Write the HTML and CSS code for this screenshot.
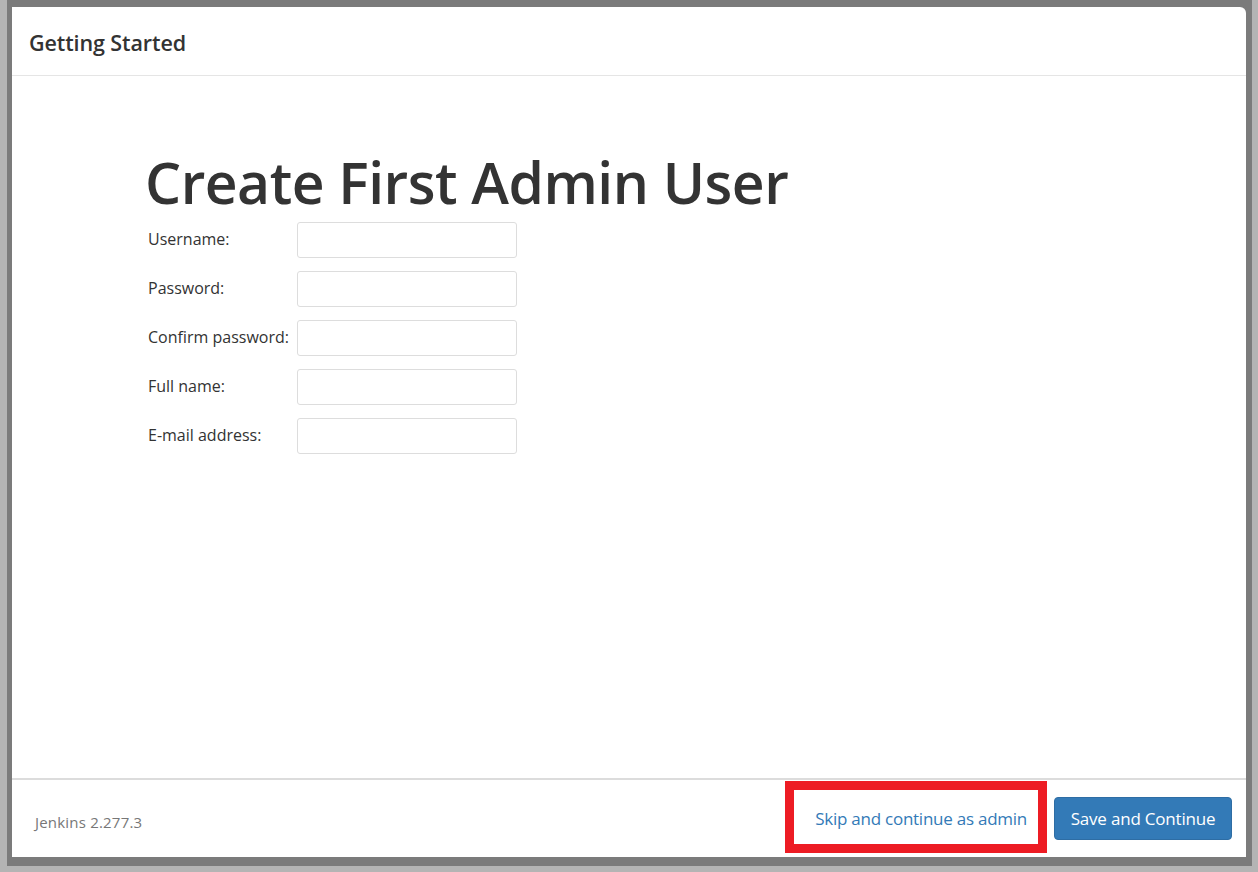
FILE: index.html
```html
<!DOCTYPE html>
<html>
<head>
<meta charset="utf-8">
<link rel="stylesheet" href="styles.css">
</head>
<body>
<div class="backdrop">
  <div class="dialog">
    <div class="dlg-header">
      <h4 class="dlg-title">Getting Started</h4>
    </div>
    <div class="dlg-body">
      <h1 class="page-title">Create First Admin User</h1>
      <div class="form">
        <div class="row"><label class="lbl">Username:</label><input class="field" type="text"></div>
        <div class="row"><label class="lbl">Password:</label><input class="field" type="password"></div>
        <div class="row"><label class="lbl">Confirm password:</label><input class="field" type="password"></div>
        <div class="row"><label class="lbl">Full name:</label><input class="field" type="text"></div>
        <div class="row"><label class="lbl">E-mail address:</label><input class="field" type="text"></div>
      </div>
    </div>
    <div class="dlg-footer">
      <div class="version">Jenkins 2.277.3</div>
      <div class="actions">
        <div class="skip-wrap">
          <a class="skip" href="#">Skip and continue as admin</a>
          <span class="highlight"></span>
        </div>
        <button class="btn-primary">Save and Continue</button>
      </div>
    </div>
  </div>
</div>
</body>
</html>
```
FILE: styles.css
```css
html, body {
  margin: 0;
  padding: 0;
}
body {
  width: 1258px;
  height: 872px;
  background: #b4b4b4;
  font-family: "Open Sans", "Noto Sans", sans-serif;
  overflow: hidden;
}
.backdrop {
  margin-left: 7px;
  width: 1245px;
  height: 866px;
  background: #7b7b7b;
  padding: 7px 6px 9px 5px;
  box-sizing: border-box;
}
.dialog {
  background: #fff;
  height: 100%;
  border-radius: 0 6px 0 0;
  display: flex;
  flex-direction: column;
}
.dlg-header {
  height: 69px;
  border-bottom: 1px solid #e5e5e5;
  display: flex;
  align-items: center;
  padding-left: 17px;
  padding-top: 2px;
  box-sizing: border-box;
}
.dlg-title {
  margin: 0;
  font-size: 21.5px;
  font-weight: 600;
  color: #333;
  letter-spacing: -0.1px;
}
.dlg-body {
  flex: 1;
  padding-left: 133px;
  padding-top: 70px;
}
.page-title {
  margin: 0;
  font-size: 57px;
  font-weight: 600;
  color: #333;
  line-height: 72px;
  letter-spacing: -0.5px;
}
.form {
  display: flex;
  flex-direction: column;
  gap: 13px;
  margin-top: 4px;
}
.row {
  display: flex;
  align-items: center;
  height: 36px;
}
.lbl {
  width: 152px;
  padding-left: 3px;
  font-size: 16px;
  color: #333;
  box-sizing: border-box;
  white-space: nowrap;
  margin-top: -2px;
}
.field {
  width: 220px;
  height: 36px;
  box-sizing: border-box;
  border: 1px solid #ddd;
  border-radius: 3px;
  margin: 0;
  padding: 0 8px;
}
.dlg-footer {
  height: 77px;
  border-top: 2px solid #dcdcdc;
  display: flex;
  align-items: center;
  justify-content: space-between;
  padding: 0 14px 0 23px;
}
.version {
  font-size: 15px;
  color: #777;
  margin-top: 7px;
  letter-spacing: 0.2px;
}
.actions {
  display: flex;
  align-items: center;
  gap: 27px;
}
.skip-wrap {
  position: relative;
  line-height: 22px;
}
.skip {
  color: #337ab7;
  text-decoration: none;
  font-size: 17px;
  letter-spacing: -0.25px;
}
.highlight {
  position: absolute;
  left: -30px;
  top: -27px;
  right: -20px;
  height: 72px;
  border: 9px solid #ed1c24;
  box-sizing: border-box;
}
.btn-primary {
  background: #337ab7;
  border: 1px solid #2e6da4;
  color: #fff;
  border-radius: 4px;
  font-family: inherit;
  font-size: 17px;
  width: 178px;
  height: 43px;
  padding: 0;
  letter-spacing: -0.2px;
}
```
